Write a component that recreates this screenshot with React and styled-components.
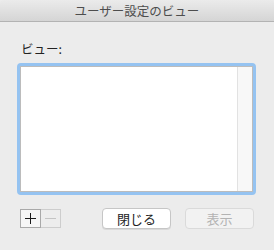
import React from 'react';
import styled, { createGlobalStyle } from 'styled-components';

const GlobalStyle = createGlobalStyle`
  html, body {
    margin: 0;
    padding: 0;
    background: #ececec;
  }
  body {
    font-family: "Noto Sans CJK JP", "Liberation Sans", sans-serif;
  }
`;

const Window = styled.div`
  width: 274px;
  height: 250px;
  background: #ececec;
  overflow: hidden;
  display: flex;
  flex-direction: column;
`;

const TitleBar = styled.div`
  height: 21px;
  line-height: 22px;
  border-bottom: 1px solid #b3b3b3;
  background: linear-gradient(#ebebeb, #d5d5d5);
  text-align: center;
  font-size: 12.5px;
  color: #4d4d4d;
  border-top-left-radius: 4px;
  border-top-right-radius: 4px;
`;

const Body = styled.div`
  padding: 19px 18px 0 17px;
  display: flex;
  flex-direction: column;
`;

const Label = styled.div`
  font-size: 12.5px;
  line-height: 16px;
  color: #222;
  padding-left: 4px;
  margin-bottom: 6px;
`;

const ListFrame = styled.div`
  height: 126px;
  border: 3px solid #95c3f1;
  border-radius: 4px;
  display: flex;
`;

const ListInner = styled.div`
  flex: 1;
  display: flex;
  background: #fff;
  border: 1px solid #bcbcbc;
`;

const ListArea = styled.div`
  flex: 1;
`;

const Track = styled.div`
  width: 14px;
  background: #f8f8f8;
  border-left: 1px solid #e2e2e2;
`;

const Footer = styled.div`
  display: flex;
  align-items: center;
  margin-top: 13px;
  padding-left: 3px;
`;

const Segment = styled.div`
  display: flex;
  height: 19px;
`;

const SegButton = styled.div`
  width: 19px;
  height: 17px;
  display: flex;
  align-items: center;
  justify-content: center;
  background: ${p => (p.disabled ? '#ededed' : '#f6f6f6')};
  border: 1px solid ${p => (p.disabled ? '#cdcdcd' : '#a9a9a9')};
  border-left-width: ${p => (p.first ? '1px' : '0')};
`;

const PushButton = styled.div`
  width: 67px;
  height: 19px;
  border-radius: 4px;
  display: flex;
  align-items: center;
  justify-content: center;
  font-size: 13px;
  background: ${p => (p.disabled ? '#f2f2f2' : '#ffffff')};
  color: ${p => (p.disabled ? '#b3b3b3' : '#222222')};
  border: 1px solid ${p => (p.disabled ? '#dadada' : '#c6c6c6')};
  box-shadow: ${p => (p.disabled ? 'none' : '0 1px 0 rgba(0,0,0,0.08)')};
  margin-left: ${p => p.gap}px;
`;

const Glyph = ({ minus, color }) => (
  <svg width="11" height="11" viewBox="0 0 11 11">
    <line x1="0" y1="5.5" x2="11" y2="5.5" stroke={color} strokeWidth="1" />
    {!minus && <line x1="5.5" y1="0" x2="5.5" y2="11" stroke={color} strokeWidth="1" />}
  </svg>
);

export default function App() {
  return (
    <Window>
      <GlobalStyle />
      <TitleBar>ユーザー設定のビュー</TitleBar>
      <Body>
        <Label>ビュー:</Label>
        <ListFrame>
          <ListInner>
            <ListArea />
            <Track />
          </ListInner>
        </ListFrame>
        <Footer>
          <Segment>
            <SegButton first>
              <Glyph color="#1a1a1a" />
            </SegButton>
            <SegButton disabled>
              <Glyph minus color="#c4c4c4" />
            </SegButton>
          </Segment>
          <PushButton gap={41}>閉じる</PushButton>
          <PushButton gap={14} disabled>表示</PushButton>
        </Footer>
      </Body>
    </Window>
  );
}
